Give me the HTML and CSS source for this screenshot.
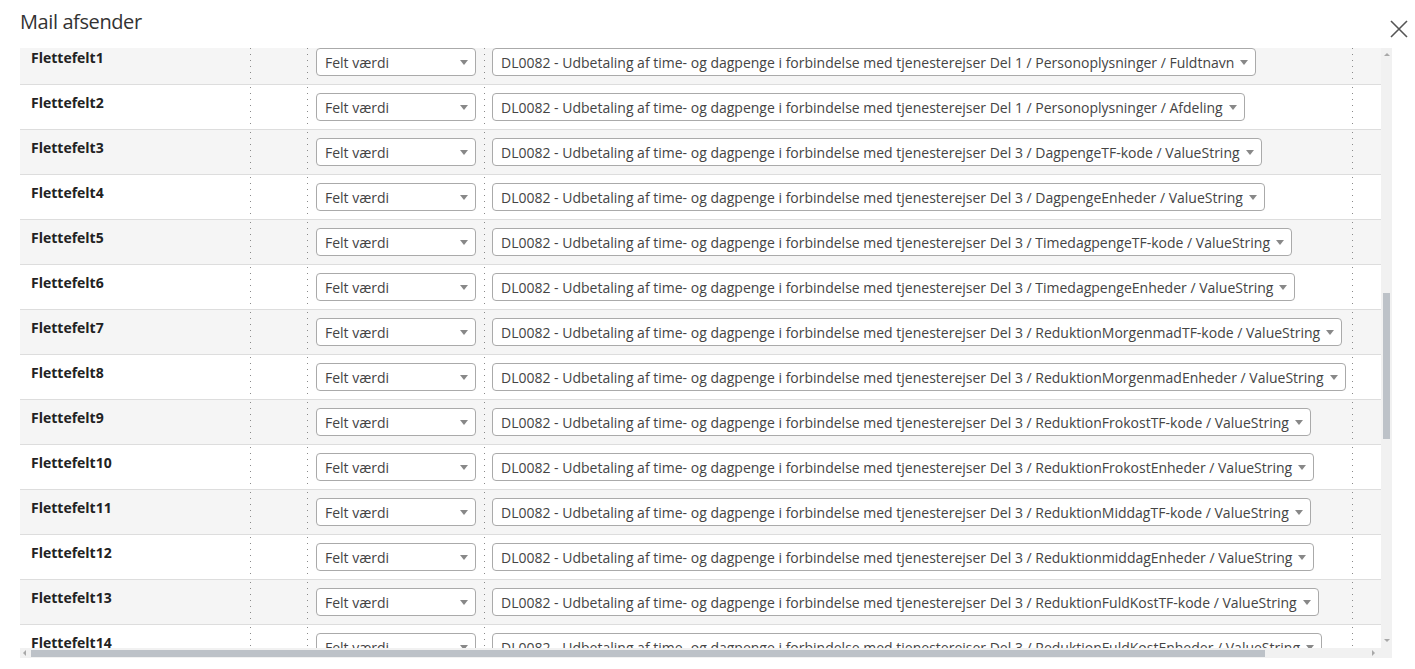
FILE: index.html
```html
<!DOCTYPE html>
<html lang="da">
<head>
    <meta charset="UTF-8">
    <title>Mail afsender</title>
    <link rel="stylesheet" href="styles.css">
</head>
<body>
<div class="dialog">
    <!--titel-->
    <div class="dialog_head">
        <h2 class="dialog_title">Mail afsender</h2>
        <span class="dialog_close">
            <svg width="18" height="18" viewBox="0 0 18 18"><path d="M1 1 L17 17 M17 1 L1 17" stroke="#555" stroke-width="1.6" fill="none"/></svg>
        </span>
    </div>

    <!--flettefelter-->
    <div class="panel">
        <div class="viewport">
            <div class="rows">
                <div class="row">
                    <div class="cell cell_name">Flettefelt1</div>
                    <div class="cell cell_gap"></div>
                    <div class="cell cell_type"><span class="pick pick_type">Felt værdi<i class="caret"></i></span></div>
                    <div class="cell cell_value"><span class="pick">DL0082 - Udbetaling af time- og dagpenge i forbindelse med tjenesterejser Del 1 / Personoplysninger / Fuldtnavn<i class="caret"></i></span></div>
                    <div class="cell cell_end"></div>
                </div>
                <div class="row">
                    <div class="cell cell_name">Flettefelt2</div>
                    <div class="cell cell_gap"></div>
                    <div class="cell cell_type"><span class="pick pick_type">Felt værdi<i class="caret"></i></span></div>
                    <div class="cell cell_value"><span class="pick">DL0082 - Udbetaling af time- og dagpenge i forbindelse med tjenesterejser Del 1 / Personoplysninger / Afdeling<i class="caret"></i></span></div>
                    <div class="cell cell_end"></div>
                </div>
                <div class="row">
                    <div class="cell cell_name">Flettefelt3</div>
                    <div class="cell cell_gap"></div>
                    <div class="cell cell_type"><span class="pick pick_type">Felt værdi<i class="caret"></i></span></div>
                    <div class="cell cell_value"><span class="pick">DL0082 - Udbetaling af time- og dagpenge i forbindelse med tjenesterejser Del 3 / DagpengeTF-kode / ValueString<i class="caret"></i></span></div>
                    <div class="cell cell_end"></div>
                </div>
                <div class="row">
                    <div class="cell cell_name">Flettefelt4</div>
                    <div class="cell cell_gap"></div>
                    <div class="cell cell_type"><span class="pick pick_type">Felt værdi<i class="caret"></i></span></div>
                    <div class="cell cell_value"><span class="pick">DL0082 - Udbetaling af time- og dagpenge i forbindelse med tjenesterejser Del 3 / DagpengeEnheder / ValueString<i class="caret"></i></span></div>
                    <div class="cell cell_end"></div>
                </div>
                <div class="row">
                    <div class="cell cell_name">Flettefelt5</div>
                    <div class="cell cell_gap"></div>
                    <div class="cell cell_type"><span class="pick pick_type">Felt værdi<i class="caret"></i></span></div>
                    <div class="cell cell_value"><span class="pick">DL0082 - Udbetaling af time- og dagpenge i forbindelse med tjenesterejser Del 3 / TimedagpengeTF-kode / ValueString<i class="caret"></i></span></div>
                    <div class="cell cell_end"></div>
                </div>
                <div class="row">
                    <div class="cell cell_name">Flettefelt6</div>
                    <div class="cell cell_gap"></div>
                    <div class="cell cell_type"><span class="pick pick_type">Felt værdi<i class="caret"></i></span></div>
                    <div class="cell cell_value"><span class="pick">DL0082 - Udbetaling af time- og dagpenge i forbindelse med tjenesterejser Del 3 / TimedagpengeEnheder / ValueString<i class="caret"></i></span></div>
                    <div class="cell cell_end"></div>
                </div>
                <div class="row">
                    <div class="cell cell_name">Flettefelt7</div>
                    <div class="cell cell_gap"></div>
                    <div class="cell cell_type"><span class="pick pick_type">Felt værdi<i class="caret"></i></span></div>
                    <div class="cell cell_value"><span class="pick">DL0082 - Udbetaling af time- og dagpenge i forbindelse med tjenesterejser Del 3 / ReduktionMorgenmadTF-kode / ValueString<i class="caret"></i></span></div>
                    <div class="cell cell_end"></div>
                </div>
                <div class="row">
                    <div class="cell cell_name">Flettefelt8</div>
                    <div class="cell cell_gap"></div>
                    <div class="cell cell_type"><span class="pick pick_type">Felt værdi<i class="caret"></i></span></div>
                    <div class="cell cell_value"><span class="pick">DL0082 - Udbetaling af time- og dagpenge i forbindelse med tjenesterejser Del 3 / ReduktionMorgenmadEnheder / ValueString<i class="caret"></i></span></div>
                    <div class="cell cell_end"></div>
                </div>
                <div class="row">
                    <div class="cell cell_name">Flettefelt9</div>
                    <div class="cell cell_gap"></div>
                    <div class="cell cell_type"><span class="pick pick_type">Felt værdi<i class="caret"></i></span></div>
                    <div class="cell cell_value"><span class="pick">DL0082 - Udbetaling af time- og dagpenge i forbindelse med tjenesterejser Del 3 / ReduktionFrokostTF-kode / ValueString<i class="caret"></i></span></div>
                    <div class="cell cell_end"></div>
                </div>
                <div class="row">
                    <div class="cell cell_name">Flettefelt10</div>
                    <div class="cell cell_gap"></div>
                    <div class="cell cell_type"><span class="pick pick_type">Felt værdi<i class="caret"></i></span></div>
                    <div class="cell cell_value"><span class="pick">DL0082 - Udbetaling af time- og dagpenge i forbindelse med tjenesterejser Del 3 / ReduktionFrokostEnheder / ValueString<i class="caret"></i></span></div>
                    <div class="cell cell_end"></div>
                </div>
                <div class="row">
                    <div class="cell cell_name">Flettefelt11</div>
                    <div class="cell cell_gap"></div>
                    <div class="cell cell_type"><span class="pick pick_type">Felt værdi<i class="caret"></i></span></div>
                    <div class="cell cell_value"><span class="pick">DL0082 - Udbetaling af time- og dagpenge i forbindelse med tjenesterejser Del 3 / ReduktionMiddagTF-kode / ValueString<i class="caret"></i></span></div>
                    <div class="cell cell_end"></div>
                </div>
                <div class="row">
                    <div class="cell cell_name">Flettefelt12</div>
                    <div class="cell cell_gap"></div>
                    <div class="cell cell_type"><span class="pick pick_type">Felt værdi<i class="caret"></i></span></div>
                    <div class="cell cell_value"><span class="pick">DL0082 - Udbetaling af time- og dagpenge i forbindelse med tjenesterejser Del 3 / ReduktionmiddagEnheder / ValueString<i class="caret"></i></span></div>
                    <div class="cell cell_end"></div>
                </div>
                <div class="row">
                    <div class="cell cell_name">Flettefelt13</div>
                    <div class="cell cell_gap"></div>
                    <div class="cell cell_type"><span class="pick pick_type">Felt værdi<i class="caret"></i></span></div>
                    <div class="cell cell_value"><span class="pick">DL0082 - Udbetaling af time- og dagpenge i forbindelse med tjenesterejser Del 3 / ReduktionFuldKostTF-kode / ValueString<i class="caret"></i></span></div>
                    <div class="cell cell_end"></div>
                </div>
                <div class="row">
                    <div class="cell cell_name">Flettefelt14</div>
                    <div class="cell cell_gap"></div>
                    <div class="cell cell_type"><span class="pick pick_type">Felt værdi<i class="caret"></i></span></div>
                    <div class="cell cell_value"><span class="pick">DL0082 - Udbetaling af time- og dagpenge i forbindelse med tjenesterejser Del 3 / ReduktionFuldKostEnheder / ValueString<i class="caret"></i></span></div>
                    <div class="cell cell_end"></div>
                </div>
            </div>
        </div>

        <!--lodret rullebjaelke-->
        <div class="vbar">
            <i class="arrow arrow_up"></i>
            <div class="vbar_thumb"></div>
            <i class="arrow arrow_down"></i>
        </div>

        <!--vandret rullebjaelke-->
        <div class="hbar">
            <i class="arrow arrow_left"></i>
            <div class="hbar_thumb"></div>
            <i class="arrow arrow_right"></i>
        </div>
        <div class="corner"></div>
    </div>
</div>
</body>
</html>
```

FILE: styles.css
```css
*{
    margin: 0;
    padding: 0;
    box-sizing: border-box;
}
body{
    background-color: #FFFFFF;
    font-family: "Open Sans", "Liberation Sans", sans-serif;
    font-size: 14px;
    color: #333;
}
.dialog{
    width: 1415px;
    height: 669px;
    padding: 0 20px;
}
.dialog_head{
    height: 48px;
    display: flex;
    justify-content: space-between;
}
.dialog_title{
    font-size: 20px;
    font-weight: 400;
    line-height: 24px;
    letter-spacing: -0.4px;
    padding-top: 10px;
    color: #333;
}
.dialog_close{
    width: 18px;
    height: 18px;
    margin: 20px -13px 0 0;
}

/*tabel med rullebjaelker*/
.panel{
    display: grid;
    grid-template-columns: 1361px 11px;
    grid-template-rows: 600px 10px;
}
.viewport{
    overflow: hidden;
}
.rows{
    margin-top: -8px;
    width: 1361px;
}
.row{
    display: grid;
    grid-template-columns: 230px 57px 177px 868px 29px;
    height: 45px;
    border-bottom: 1px solid #ddd;
    background-color: #FFFFFF;
}
.row:nth-child(odd){
    background-color: #f5f5f5;
}
.cell{
    background-image: repeating-linear-gradient(to bottom, #8a8a8a 0, #8a8a8a 1px, transparent 1px, transparent 6px);
    background-size: 1px 100%;
    background-repeat: no-repeat;
    background-position: left 2px;
    padding-top: 8px;
}
.cell_name{
    background-image: none;
    padding-left: 11px;
    font-weight: 700;
    line-height: 20px;
    color: #222;
}
.cell_type{
    padding-left: 9px;
}
.cell_value{
    padding-left: 8px;
    white-space: nowrap;
}
.pick{
    display: inline-flex;
    align-items: center;
    height: 28px;
    padding: 0 7px 0 8px;
    border: 1px solid #aaa;
    border-radius: 4px;
    background-color: #FFFFFF;
    color: #444;
    white-space: nowrap;
}
.pick_type{
    width: 160px;
    justify-content: space-between;
}
.caret{
    width: 0;
    height: 0;
    margin-left: 6px;
    border-left: 4px solid transparent;
    border-right: 4px solid transparent;
    border-top: 5px solid #888;
}

/*rullebjaelker*/
.vbar{
    background-color: #f1f1f1;
    display: flex;
    flex-direction: column;
    align-items: center;
    padding: 5px 0 6px;
}
.vbar_thumb{
    width: 7px;
    height: 146px;
    margin-top: 237px;
    background-color: #bdc2c8;
}
.hbar{
    background-color: #f1f1f1;
    display: flex;
    align-items: center;
    padding: 0 6px 0 3px;
}
.hbar_thumb{
    width: 1234px;
    height: 7px;
    margin-left: 5px;
    background-color: #bdc2c8;
}
.corner{
    background-color: #f1f1f1;
}
.arrow{
    width: 0;
    height: 0;
}
.arrow_up{
    border-left: 3px solid transparent;
    border-right: 3px solid transparent;
    border-bottom: 3px solid #a8a8a8;
}
.arrow_down{
    margin-top: auto;
    border-left: 3px solid transparent;
    border-right: 3px solid transparent;
    border-top: 3px solid #a8a8a8;
}
.arrow_left{
    border-top: 3px solid transparent;
    border-bottom: 3px solid transparent;
    border-right: 3px solid #a8a8a8;
}
.arrow_right{
    margin-left: auto;
    border-top: 3px solid transparent;
    border-bottom: 3px solid transparent;
    border-left: 3px solid #a8a8a8;
}
```
